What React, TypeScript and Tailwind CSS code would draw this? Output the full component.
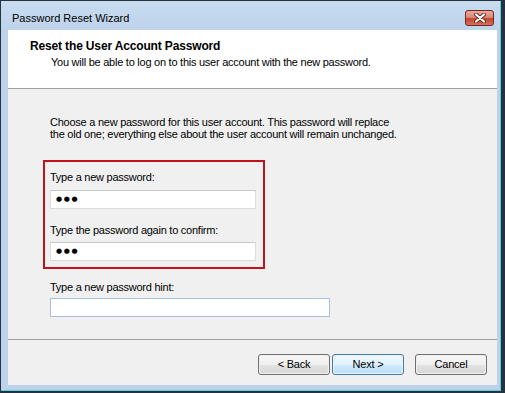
import React from "react";

function Dots() {
  return (
    <span className="font-['DejaVu_Sans',sans-serif] text-[7px] tracking-[1.6px] text-black leading-none ml-[1px]">●●●</span>
  );
}

function Field({ children, wide }: { children?: React.ReactNode; wide?: boolean }) {
  return (
    <div
      className={
        wide
          ? "w-[280px] h-[19px] bg-white border border-[#a9c0dd] flex items-center pl-[4px]"
          : "w-[206px] h-[19px] bg-white border border-[#dcdcdc] border-t-[#c8c8c8] flex items-center pl-[4px]"
      }
    >
      {children}
    </div>
  );
}

function Btn({ children, primary }: { children: React.ReactNode; primary?: boolean }) {
  return (
    <div
      className={
        primary
          ? "w-[72px] h-[21px] rounded-[3px] border border-[#3c7fb1] p-px"
          : "w-[72px] h-[21px] rounded-[3px] border border-[#707070] p-px"
      }
    >
      <div
        className={
          primary
            ? "h-full rounded-[2px] bg-[linear-gradient(to_bottom,#eef8fe_0%,#e2f3fd_50%,#cfeafb_50%,#bfe2f7_100%)] flex items-center justify-center text-[11px] tracking-[-0.2px] text-black"
            : "h-full rounded-[2px] bg-[linear-gradient(to_bottom,#f6f6f6_0%,#efefef_50%,#e3e3e3_50%,#d8d8d8_100%)] flex items-center justify-center text-[11px] tracking-[-0.2px] text-black"
        }
      >
        {children}
      </div>
    </div>
  );
}

function CloseBtn() {
  return (
    <div className="w-[29px] h-[16px] mt-[9px] rounded-[3px] border border-[#6e2a22] bg-[linear-gradient(to_bottom,#eaa99a_0%,#dc8a78_45%,#c4412c_55%,#d9725c_100%)] flex items-center justify-center">
      <svg width="12" height="10" viewBox="0 0 12 10">
        <path d="M2 1.5 L10 8.5 M10 1.5 L2 8.5" stroke="#5a2a24" strokeWidth="4" strokeLinecap="round" />
        <path d="M2 1.5 L10 8.5 M10 1.5 L2 8.5" stroke="#ffffff" strokeWidth="2.2" strokeLinecap="round" />
      </svg>
    </div>
  );
}

export default function App() {
  return (
    <div className="w-[505px] h-[393px] border-t border-l border-r-[4px] border-b-[2px] border-[#26333f] font-['Liberation_Sans',Arial,sans-serif] text-black">
      <div className="h-full flex flex-col border-r border-b border-[#56cfe3] bg-[#bcd3eb]">
        {/* title bar */}
        <div className="h-[29px] flex items-start justify-between pl-[11px] pr-[6px] bg-[linear-gradient(to_bottom,#c9dcf0_0%,#bdd3eb_100%)]">
          <div className="mt-[10px] text-[11px] leading-[14px] text-black">Password Reset Wizard</div>
          <CloseBtn />
        </div>
        {/* client */}
        <div className="ml-[7px] w-[489px] h-[355px] flex flex-col bg-[#f0f0f0]">
          <div className="h-[59px] bg-white border-b border-[#a0a0a0] pt-[8px]">
            <div className="pl-[22px] text-[12px] leading-[16px] font-bold tracking-[-0.15px]">Reset the User Account Password</div>
            <div className="pl-[43px] mt-[1px] text-[11px] leading-[14px] tracking-[-0.25px]">
              You will be able to log on to this user account with the new password.
            </div>
          </div>
          <div className="flex-1 flex flex-col pt-[27px] pl-[35px]">
            <div className="pl-[7px] text-[11px] leading-[12px] tracking-[-0.25px]">
              <div>Choose a new password for this user account. This password will replace</div>
              <div>the old one; everything else about the user account will remain unchanged.</div>
            </div>
            <div className="mt-[20px] w-[222px] border-2 border-[#c0141c] pt-[9px] pl-[5px] pb-[6px]">
              <div className="text-[11px] leading-[13px] tracking-[-0.25px]">Type a new password:</div>
              <div className="mt-[6px]">
                <Field>
                  <Dots />
                </Field>
              </div>
              <div className="mt-[15px] text-[11px] leading-[13px] tracking-[-0.25px]">Type the password again to confirm:</div>
              <div className="mt-[5px]">
                <Field>
                  <Dots />
                </Field>
              </div>
            </div>
            <div className="pl-[7px] mt-[12px] text-[11px] leading-[13px] tracking-[-0.25px]">Type a new password hint:</div>
            <div className="pl-[7px] mt-[4px]">
              <Field wide />
            </div>
          </div>
          <div className="h-[46px] border-t border-[#a0a0a0] pt-[14px] pr-[10px] flex justify-end">
            <Btn>&lt; Back</Btn>
            <div className="ml-[2px]">
              <Btn primary>Next &gt;</Btn>
            </div>
            <div className="ml-[11px]">
              <Btn>Cancel</Btn>
            </div>
          </div>
        </div>
      </div>
    </div>
  );
}
